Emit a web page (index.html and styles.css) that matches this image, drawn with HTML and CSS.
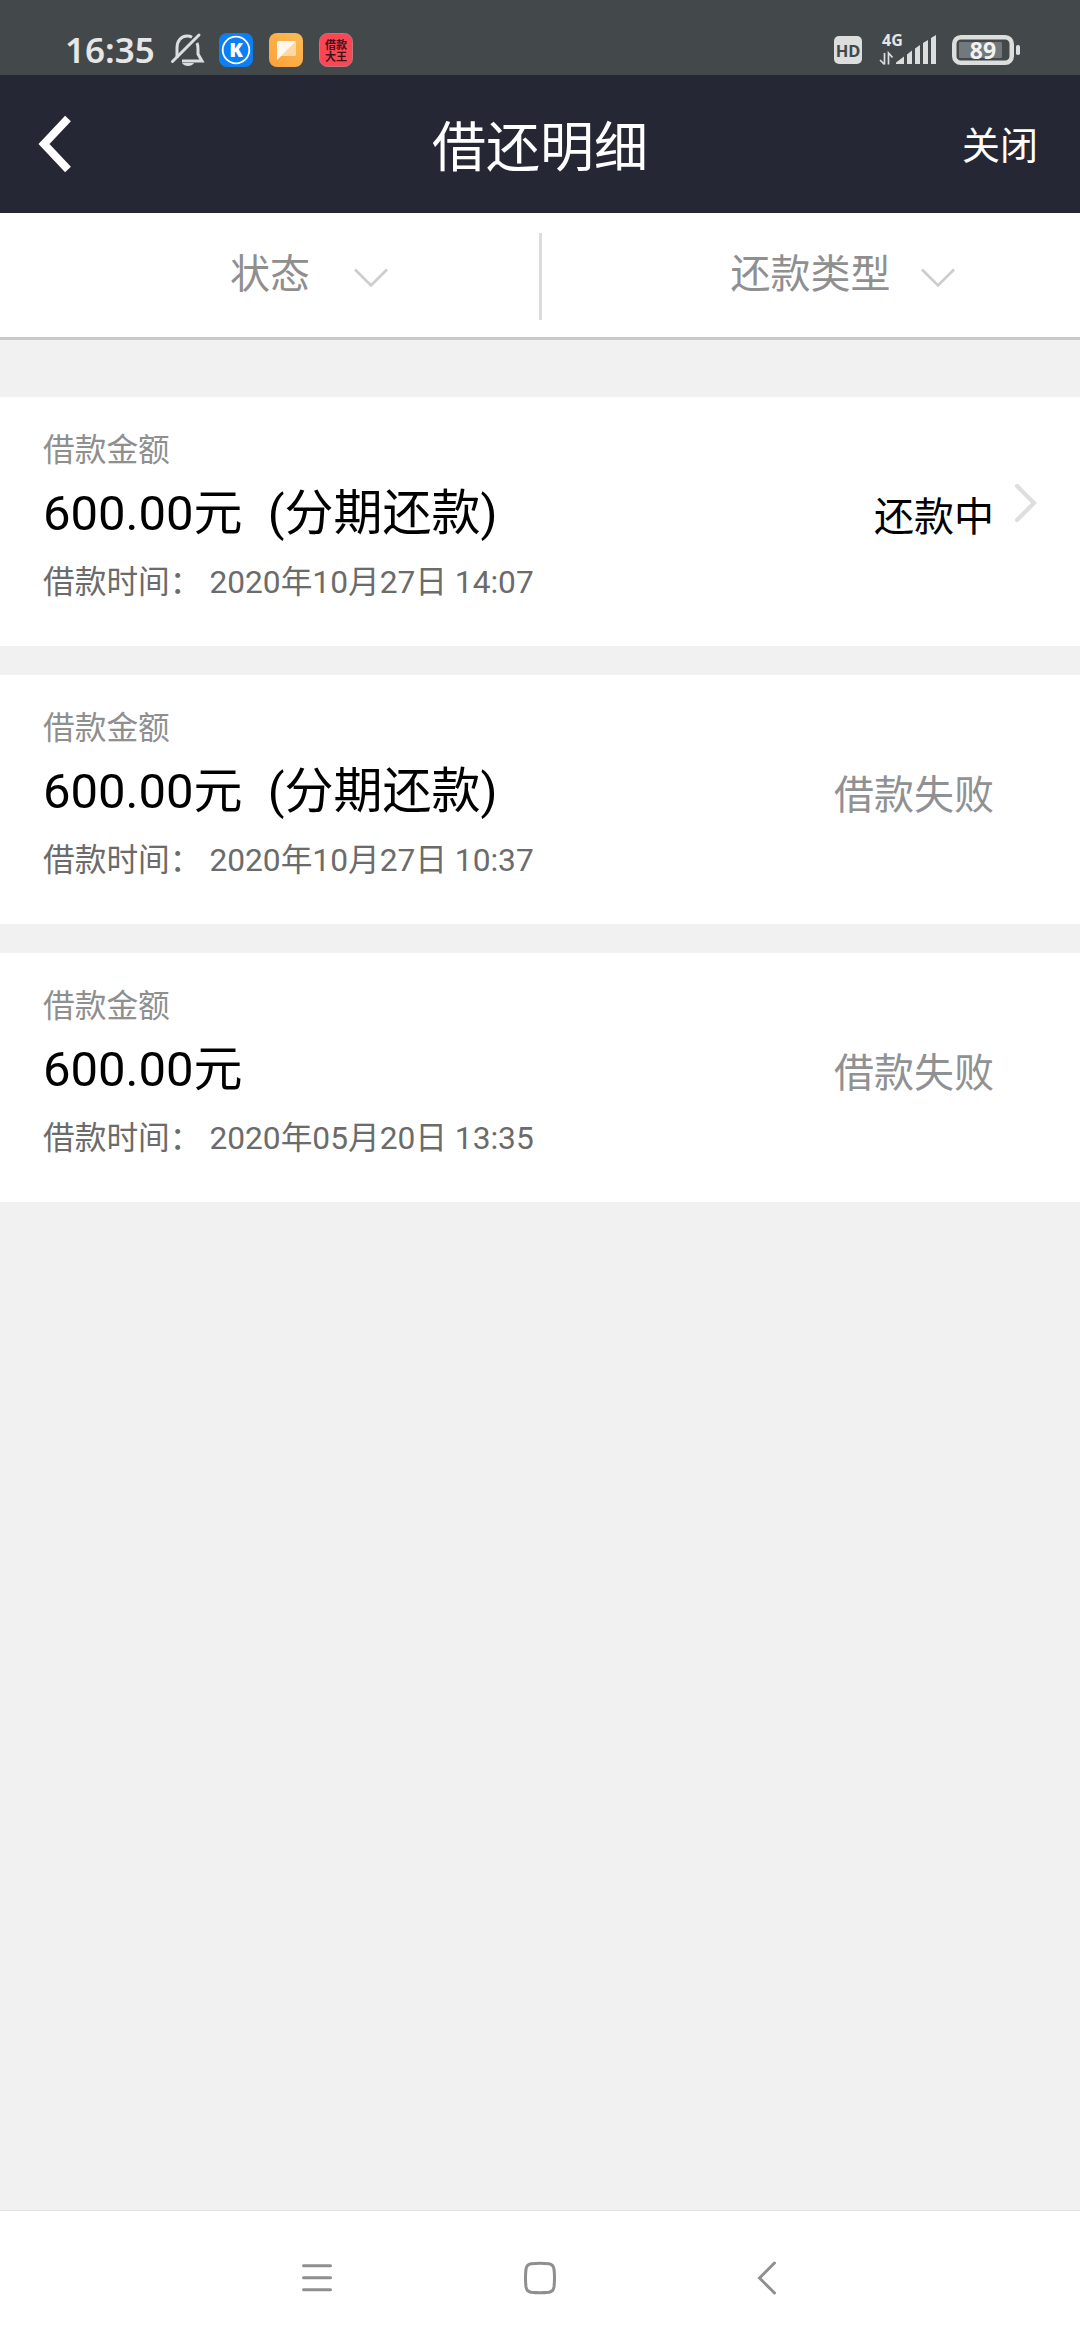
FILE: index.html
```html
<!DOCTYPE html>
<html lang="zh-CN">
<head>
    <meta charset="UTF-8">
    <meta name="viewport" content="width=device-width, initial-scale=1.0">
    <title>借还明细</title>
    <link rel="stylesheet" href="styles.css">
</head>
<body>
    <div class="statusbar">
        <div class="status-left">
            <span class="clock">16:35</span>
            <svg class="bell" width="34" height="34" viewBox="0 0 34 34">
                <path d="M7 25V15C7 8 11 3 17 3q3 0 5 1.200M27 10q1 2 1 6v5l4 7H12" fill="none" stroke="#dcdddd" stroke-width="3"/>
                <path d="M2.500 28.500L29 2" stroke="#dcdddd" stroke-width="3" stroke-linecap="round"/>
                <path d="M12 30h12q-2 3-6 3t-6-3z" fill="#dcdddd"/>
            </svg>
            <svg class="app" width="34" height="34" viewBox="0 0 34 34">
                <rect width="34" height="34" rx="8" fill="#0c80f2"/>
                <circle cx="17" cy="17" r="13.300" fill="none" stroke="#fff" stroke-width="1.800"/>
                <text class="app-k" x="17" y="24" text-anchor="middle">K</text>
            </svg>
            <svg class="app" width="34" height="34" viewBox="0 0 34 34">
                <defs>
                    <linearGradient id="orange" x1="1" y1="0" x2="0" y2="1">
                        <stop offset="0" stop-color="#f9bd55"/>
                        <stop offset="1" stop-color="#ffa038"/>
                    </linearGradient>
                </defs>
                <rect width="34" height="34" rx="8" fill="url(#orange)"/>
                <path d="M9.500 8H25.500q1.500 0 1.500 1.500V21.500q0 1.500-1.500 1.500H12L8 27V9.500Q8 8 9.500 8z" fill="#ffd9a0"/>
                <path d="M9.500 8H27L8 27V9.500Q8 8 9.500 8z" fill="#fff8ee"/>
            </svg>
            <svg class="app" width="34" height="34" viewBox="0 0 34 34">
                <rect x=".5" y=".5" width="33" height="33" rx="8" fill="#fb4654" stroke="#b9787f"/>
                <text class="app-cn" x="17" y="16" text-anchor="middle">借款</text>
                <text class="app-cn" x="17" y="27.500" text-anchor="middle">大王</text>
            </svg>
        </div>
        <div class="status-right">
            <span class="hd">HD</span>
            <svg class="signal" width="58" height="34" viewBox="0 0 58 34">
                <text class="net" x="3" y="12.500">4G</text>
                <path d="M5.500 20v11.500M1 27l4.500 4.500M9.500 31.500V20l4 4.500" fill="none" stroke="#dcdddd" stroke-width="1.700"/>
                <path d="M17 31V29.500L25 23.500V31zM28 31V21.500L33 17.500V31zM36 31V15.500L41 12V31zM44 31V10L49 7V31zM52 31V5L57 2V31z" fill="#dcdddd"/>
            </svg>
            <svg class="battery" width="70" height="30" viewBox="0 0 70 30">
                <rect x="2.250" y="2.250" width="57.500" height="25.500" rx="6.500" fill="none" stroke="#dcdddd" stroke-width="4.500"/>
                <rect x="7" y="7" width="43" height="16" rx="1" fill="#73787c"/>
                <rect x="64" y="10" width="4" height="10" rx="1.800" fill="#dcdddd"/>
                <text class="level" x="31" y="23.500" text-anchor="middle">89</text>
            </svg>
        </div>
    </div>

    <header class="header">
        <a class="back" href="#">
            <svg width="36" height="60" viewBox="0 0 36 60">
                <path d="M31 4.500L7 30l24 25.500" fill="none" stroke="#fff" stroke-width="8"/>
            </svg>
        </a>
        <h1 class="title">借还明细</h1>
        <a class="close" href="#">关闭</a>
    </header>

    <div class="filters">
        <div class="filter filter-state">
            <span>状态</span>
            <svg class="chevron" width="34" height="20" viewBox="0 0 34 20"><path d="M1 1.500l16 16 16-16" fill="none" stroke="#cdcdcd" stroke-width="2.600"/></svg>
        </div>
        <div class="divider"></div>
        <div class="filter filter-type">
            <span>还款类型</span>
            <svg class="chevron" width="34" height="20" viewBox="0 0 34 20"><path d="M1 1.500l16 16 16-16" fill="none" stroke="#cdcdcd" stroke-width="2.600"/></svg>
        </div>
    </div>

    <main class="list">
        <div class="card">
            <div class="info">
                <p class="label">借款金额</p>
                <p class="amount">600.00元<span class="plan">(分期还款)</span></p>
                <p class="time">借款时间：<span class="date">2020年10月27日 14:07</span></p>
            </div>
            <div class="state active">还款中</div>
            <svg class="arrow" width="24" height="40" viewBox="0 0 24 40"><path d="M3 3l17 17L3 37" fill="none" stroke="#dedede" stroke-width="4.200" stroke-linecap="round"/></svg>
        </div>
        <div class="card">
            <div class="info">
                <p class="label">借款金额</p>
                <p class="amount">600.00元<span class="plan">(分期还款)</span></p>
                <p class="time">借款时间：<span class="date">2020年10月27日 10:37</span></p>
            </div>
            <div class="state">借款失败</div>
        </div>
        <div class="card">
            <div class="info">
                <p class="label">借款金额</p>
                <p class="amount">600.00元</p>
                <p class="time">借款时间：<span class="date">2020年05月20日 13:35</span></p>
            </div>
            <div class="state">借款失败</div>
        </div>
    </main>

    <nav class="navbar">
        <svg width="34" height="34" viewBox="0 0 34 34"><path d="M3.500 4.700h27M3.500 16.700h27M3.500 28.700h27" stroke="#8f8f8f" stroke-width="3" stroke-linecap="round"/></svg>
        <svg width="34" height="34" viewBox="0 0 34 34"><path d="M8 2.800Q17 1.800 26 2.800 30.200 3.500 31 8 32 17 31 26 30.200 30.500 26 31.200 17 32.200 8 31.200 3.800 30.500 3 26 2 17 3 8 3.800 3.500 8 2.800z" fill="none" stroke="#8f8f8f" stroke-width="3"/></svg>
        <svg width="34" height="34" viewBox="0 0 34 34"><path d="M28.500 2L13.500 17l15 15" fill="none" stroke="#8f8f8f" stroke-width="3" stroke-linecap="round"/></svg>
    </nav>
</body>
</html>
```
FILE: styles.css
```css
* {
    box-sizing: border-box;
}

body {
    font-family: Roboto, "Noto Sans CJK SC", sans-serif;
    background-color: #f1f1f1;
    margin: 0;
    display: flex;
    flex-direction: column;
    height: 2340px;
}

h1, p {
    margin: 0;
    font-weight: 400;
}

svg {
    display: block;
    flex-shrink: 0;
    overflow: visible;
}

a {
    color: #fff;
    text-decoration: none;
}

/* barra de estado */
.statusbar {
    display: flex;
    justify-content: space-between;
    height: 75px;
    padding: 33px 58px 0 65px;
    background-color: #43484b;
}

.status-left, .status-right {
    display: flex;
    height: 34px;
    align-items: center;
}

.clock {
    width: 105px;
    font: 600 35px/34px "Noto Sans", sans-serif;
    color: #e6e6e6;
}

.bell {
    margin-right: 15px;
}

.app {
    margin-right: 16px;
}

.app-k {
    font: 800 20px "Open Sans", sans-serif;
    fill: #fff;
}

.app-cn {
    font: 700 11px "Noto Sans CJK SC", sans-serif;
    fill: #3a1218;
}

.hd {
    width: 28px;
    height: 28px;
    margin-right: 17px;
    border-radius: 5px;
    background-color: #dcdddd;
    color: #43484b;
    font: 700 16.5px/29px "Noto Sans", sans-serif;
    text-align: center;
}

.signal {
    margin-right: 15px;
}

.net {
    font: 700 16px "Noto Sans", sans-serif;
    fill: #e6e6e6;
}

.level {
    font: 700 23px "Noto Sans", sans-serif;
    fill: #f2f2f2;
}

/* cabecera */
.header {
    display: flex;
    align-items: center;
    height: 138px;
    padding: 4px 42px 0 37px;
    background-color: #252735;
    color: #fff;
}

.back, .close {
    width: 120px;
}

.back {
    padding-bottom: 4px;
}

.title {
    flex: 1;
    padding: 5px 0 0 5px;
    font-size: 54px;
    line-height: 80px;
    text-align: center;
}

.close {
    font-size: 38px;
    line-height: 60px;
    text-align: right;
}

/* filtros */
.filters {
    display: flex;
    height: 127px;
    border-bottom: 3px solid #c8c9ca;
    background-color: #fff;
    color: #8f8f8f;
    font-size: 40px;
    line-height: 60px;
}

.filter {
    display: flex;
    align-items: center;
    width: 539px;
}

.filter-state {
    padding-left: 230px;
    gap: 44px;
}

.filter-type {
    padding-left: 189px;
    gap: 30px;
}

.chevron {
    margin-top: 5px;
}

.divider {
    width: 3px;
    height: 87px;
    margin-top: 20px;
    background-color: #dcdcdc;
}

/* lista */
.list {
    display: flex;
    flex-direction: column;
    flex: 1;
    gap: 29px;
    padding-top: 57px;
}

.card {
    display: flex;
    height: 249px;
    padding-left: 43px;
    background-color: #fff;
}

.info {
    width: 740px;
    padding-top: 34px;
}

.label {
    color: #8f8f8f;
    font-size: 31.7px;
    line-height: 40px;
}

.amount {
    color: #000;
    font-size: 49px;
    line-height: 60px;
    padding-top: 13px;
}

.plan {
    margin-left: 25px;
}

.time {
    color: #6b6b6b;
    font-size: 31.7px;
    line-height: 40px;
    padding-top: 19px;
}

.date {
    margin-left: 8px;
}

.state {
    width: 211px;
    padding-top: 91px;
    color: #909193;
    font-size: 40px;
    line-height: 60px;
    text-align: right;
}

.active {
    color: #000;
}

.arrow {
    margin: 86px 0 0 20px;
}

/* botones del sistema */
.navbar {
    display: flex;
    justify-content: center;
    align-items: center;
    gap: 189px;
    height: 130px;
    padding-top: 5px;
    border-top: 1px solid #e2e2e2;
    background-color: #fff;
}
```
